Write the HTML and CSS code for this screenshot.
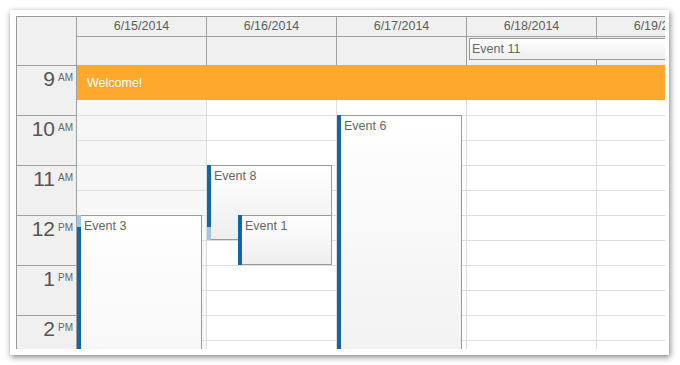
FILE: index.html
```html
<!DOCTYPE html>
<html lang="en">
<head>
    <meta charset="UTF-8">
    <meta name="viewport" content="width=device-width, initial-scale=1.0">
    <link rel="stylesheet" href="styles.css">
    <title>Week calendar</title>
</head>
<body>
    <div class="frame">
        <div class="calendar">
            <div class="head">
                <div class="corner"></div>
                <div class="day"><div class="date">6/15/2014</div><div class="allday"></div></div>
                <div class="day"><div class="date">6/16/2014</div><div class="allday"></div></div>
                <div class="day"><div class="date">6/17/2014</div><div class="allday"></div></div>
                <div class="day"><div class="date">6/18/2014</div><div class="allday"><div class="event wide">Event 11</div></div></div>
                <div class="day"><div class="date">6/19/2014</div><div class="allday"></div></div>
            </div>
            <div class="grid">
                <div class="times">
                    <div class="hour"><b>9</b><span>AM</span></div>
                    <div class="hour"><b>10</b><span>AM</span></div>
                    <div class="hour"><b>11</b><span>AM</span></div>
                    <div class="hour"><b>12</b><span>PM</span></div>
                    <div class="hour"><b>1</b><span>PM</span></div>
                    <div class="hour"><b>2</b><span>PM</span></div>
                </div>
                <div class="col weekend">
                    <div class="cell"></div><div class="cell"></div><div class="cell"></div><div class="cell"></div>
                    <div class="cell"></div><div class="cell"></div><div class="cell"></div><div class="cell"></div>
                    <div class="cell"></div><div class="cell"></div><div class="cell"></div><div class="cell"></div>
                    <div class="event ev3"><i class="bar"></i>Event 3</div>
                </div>
                <div class="col">
                    <div class="cell"></div><div class="cell"></div><div class="cell"></div><div class="cell"></div>
                    <div class="cell"></div><div class="cell"></div><div class="cell"></div><div class="cell"></div>
                    <div class="cell"></div><div class="cell"></div><div class="cell"></div><div class="cell"></div>
                    <div class="event ev8"><i class="bar"></i>Event 8</div>
                    <div class="event ev1"><i class="bar"></i>Event 1</div>
                </div>
                <div class="col">
                    <div class="cell"></div><div class="cell"></div><div class="cell"></div><div class="cell"></div>
                    <div class="cell"></div><div class="cell"></div><div class="cell"></div><div class="cell"></div>
                    <div class="cell"></div><div class="cell"></div><div class="cell"></div><div class="cell"></div>
                    <div class="event ev6"><i class="bar"></i>Event 6</div>
                </div>
                <div class="col">
                    <div class="cell"></div><div class="cell"></div><div class="cell"></div><div class="cell"></div>
                    <div class="cell"></div><div class="cell"></div><div class="cell"></div><div class="cell"></div>
                    <div class="cell"></div><div class="cell"></div><div class="cell"></div><div class="cell"></div>
                </div>
                <div class="col">
                    <div class="cell"></div><div class="cell"></div><div class="cell"></div><div class="cell"></div>
                    <div class="cell"></div><div class="cell"></div><div class="cell"></div><div class="cell"></div>
                    <div class="cell"></div><div class="cell"></div><div class="cell"></div><div class="cell"></div>
                </div>
                <div class="welcome">Welcome!</div>
            </div>
        </div>
    </div>
</body>
</html>
```

FILE: styles.css
```css
*{box-sizing:border-box;}
body{margin:0;background:#fff;font-family:'Liberation Sans', Arial, sans-serif;font-size:12.5px;color:#666;}

.frame{margin:10px;width:659px;height:345px;padding:6px 4px 6px 6px;background:#fff;box-shadow:1px 2px 6px rgba(0,0,0,0.5);}
.calendar{width:649px;height:333px;overflow:hidden;border-top:1px solid #999;border-left:1px solid #999;}

/* header */
.head{display:flex;background:#f0f0f0;border-bottom:1px solid #a0a0a0;}
.corner{flex:0 0 60px;height:48px;border-right:1px solid #a0a0a0;}
.day{flex:0 0 130px;border-right:1px solid #a0a0a0;}
.date{height:20px;line-height:19px;text-align:center;border-bottom:1px solid #a0a0a0;color:#5c5c5c;}
.allday{height:28px;position:relative;}

/* body */
.grid{display:flex;position:relative;}
.times{flex:0 0 60px;background:#f0f0f0;border-right:1px solid #a0a0a0;}
.hour{height:50px;display:flex;justify-content:flex-end;align-items:flex-start;padding:1px 3px 0 0;border-bottom:1px solid #a0a0a0;color:#555;}
.hour b{font-weight:normal;font-size:21px;line-height:24px;}
.hour span{font-size:10px;line-height:12px;margin:5px 0 0 3px;color:#666;}
.col{flex:0 0 130px;position:relative;background:#fff;border-right:1px solid #ddd;}
.col.weekend{background:#f7f7f7;}
.cell{height:25px;border-bottom:1px solid #ddd;}

.welcome{position:absolute;top:-1px;left:60px;right:0;height:35px;display:flex;align-items:center;padding-left:10px;background:#ffa82e;color:#fff;font-size:12.5px;}

/* events */
.event{position:absolute;width:125px;border:1px solid #999;padding:3px 2px 0 6px;line-height:14px;color:#666;background:linear-gradient(to bottom,#fff 0%,#eee 100%);}
.bar{position:absolute;left:-1px;top:-1px;bottom:-1px;width:4px;background:#1066a8;}
.wide{left:2px;top:1px;width:260px;height:22px;padding:0 0 0 2px;line-height:20px;}
.ev3{top:149px;left:0;height:300px;background:linear-gradient(to bottom,#fff 0,#eee 300px);}
.ev3 .bar{background:linear-gradient(to bottom,#9cc9ea 0,#9cc9ea 12px,#1066a8 12px);}
.ev8{top:99px;left:0;height:75px;}
.ev8 .bar{background:linear-gradient(to bottom,#1066a8 0,#1066a8 62px,#9cc9ea 62px);}
.ev1{top:149px;left:31px;width:94px;height:50px;}
.ev6{top:49px;left:0;height:300px;}
```
